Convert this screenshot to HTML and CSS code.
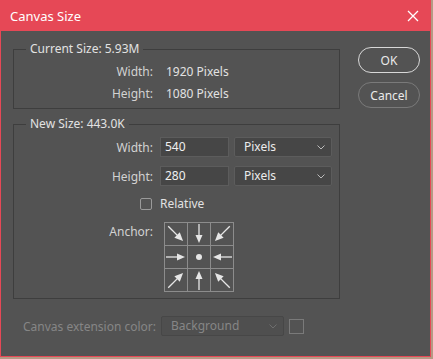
FILE: index.html
```html
<!DOCTYPE html>
<html lang="en">
<head>
    <meta charset="UTF-8">
    <title>Canvas Size</title>
    <link rel="stylesheet" href="styles.css">
</head>
<body>
    <div class="window">
        <div class="titlebar">
            <span class="title">Canvas Size</span>
            <svg class="close" width="12" height="12" viewBox="0 0 12 12">
                <path d="M1 1 L11 11 M11 1 L1 11" stroke="#fff" stroke-width="1.3" fill="none"/>
            </svg>
        </div>

        <div class="content">
            <div class="main">
                <fieldset class="group group-current">
                    <legend>Current Size: 5.93M</legend>
                    <div class="info-row"><span class="label">Width:</span><span class="value">1920 Pixels</span></div>
                    <div class="info-row"><span class="label">Height:</span><span class="value">1080 Pixels</span></div>
                </fieldset>

                <fieldset class="group group-new">
                    <legend>New Size: 443.0K</legend>
                    <div class="field">
                        <span class="label">Width:</span>
                        <div class="input">540</div>
                        <div class="select">Pixels
                            <svg class="chevron" width="8" height="5" viewBox="0 0 8 5"><path d="M0.5 0.5 L4 4 L7.5 0.5" stroke="#bbb" fill="none"/></svg>
                        </div>
                    </div>
                    <div class="field">
                        <span class="label">Height:</span>
                        <div class="input">280</div>
                        <div class="select">Pixels
                            <svg class="chevron" width="8" height="5" viewBox="0 0 8 5"><path d="M0.5 0.5 L4 4 L7.5 0.5" stroke="#bbb" fill="none"/></svg>
                        </div>
                    </div>
                    <div class="field field-check">
                        <span class="label"><span class="checkbox"></span></span>
                        <span class="check-text">Relative</span>
                    </div>
                    <div class="field field-anchor">
                        <span class="label">Anchor:</span>
                        <svg class="anchor" width="70" height="70" viewBox="0 0 70 70">
                            <g stroke="#8c8c8c" stroke-width="1" fill="none">
                                <rect x="0.5" y="0.5" width="69" height="69"/>
                                <path d="M23.5 0 V70 M46.5 0 V70 M0 23.5 H70 M0 46.5 H70"/>
                            </g>
                            <defs>
                                <g id="arrow">
                                    <path d="M-10 0 H2" stroke="#e6e6e6" stroke-width="1.3"/>
                                    <polygon points="1,-3.5 9,0 1,3.5" fill="#e6e6e6"/>
                                </g>
                                <g id="diag">
                                    <path d="M-11 0 H3" stroke="#e6e6e6" stroke-width="1.4"/>
                                    <polygon points="1.5,-3.8 10,0 1.5,3.8" fill="#e6e6e6"/>
                                </g>
                            </defs>
                            <use href="#diag" transform="translate(12 12) rotate(45)"/>
                            <use href="#arrow" transform="translate(35 12) rotate(90)"/>
                            <use href="#diag" transform="translate(58 12) rotate(135)"/>
                            <use href="#arrow" transform="translate(12 35)"/>
                            <circle cx="35" cy="35" r="3" fill="#e6e6e6"/>
                            <use href="#arrow" transform="translate(58 35) rotate(180)"/>
                            <use href="#diag" transform="translate(12 58) rotate(-45)"/>
                            <use href="#arrow" transform="translate(35 58) rotate(-90)"/>
                            <use href="#diag" transform="translate(58 58) rotate(-135)"/>
                        </svg>
                    </div>
                </fieldset>

                <div class="extension">
                    <span class="ext-label">Canvas extension color:</span>
                    <div class="select select-disabled">Background
                        <svg class="chevron" width="8" height="5" viewBox="0 0 8 5"><path d="M0.5 0.5 L4 4 L7.5 0.5" stroke="#6e6e6e" fill="none"/></svg>
                    </div>
                    <span class="swatch"></span>
                </div>
            </div>

            <div class="buttons">
                <button class="btn btn-ok">OK</button>
                <button class="btn btn-cancel">Cancel</button>
            </div>
        </div>
    </div>
</body>
</html>
```

FILE: styles.css
```css
* {
    box-sizing: border-box;
}

body {
    margin: 0;
    background: #b59a84;
    font-family: 'Noto Sans', 'Open Sans', sans-serif;
    font-size: 12px;
    color: #e2e2e2;
}

.window {
    width: 431px;
    height: 357px;
    background: #535353;
    border: 1px solid #e64856;
    border-top: none;
}

.titlebar {
    height: 31px;
    background: #e64856;
    display: flex;
    align-items: center;
    justify-content: space-between;
    padding: 0 11px 0 9px;
}

.title {
    color: #fff;
    font-size: 13px;
}

.close {
    display: block;
}

.content {
    display: flex;
    padding-top: 11px;
}

.main {
    margin-left: 12px;
    width: 327px;
}

.group {
    margin: 0;
    padding: 0;
    border: 1px solid #3e3e3e;
    min-width: 0;
}

.group legend {
    margin-left: 12px;
    padding: 0 4px;
    line-height: 14px;
    color: #e2e2e2;
}

.group-current {
    padding: 4px 0;
}

.info-row {
    display: flex;
    align-items: center;
    height: 22px;
}

.label {
    width: 139px;
    text-align: right;
    color: #d2d2d2;
    flex-shrink: 0;
}

.info-row .value {
    margin-left: 13px;
    color: #e2e2e2;
}

.group-new {
    margin-top: 8px;
    padding: 6px 0 6px;
}

.field {
    display: flex;
    align-items: center;
    height: 20px;
}

.field + .field {
    margin-top: 9px;
}

.field .label {
    margin-right: 7px;
}

.input {
    width: 69px;
    height: 20px;
    background: #464646;
    border: 1px solid #5c5c5c;
    padding-left: 4px;
    line-height: 18px;
    color: #f0f0f0;
}

.select {
    width: 98px;
    height: 20px;
    margin-left: 5px;
    background: #464646;
    border: 1px solid #5c5c5c;
    border-radius: 2px;
    padding: 0 6px 0 9px;
    line-height: 18px;
    color: #ececec;
    display: flex;
    align-items: center;
    justify-content: space-between;
}

.chevron {
    display: block;
}

.field-check {
    margin-top: 7px !important;
}

.checkbox {
    display: inline-block;
    width: 12px;
    height: 12px;
    border: 1px solid #9a9a9a;
    border-radius: 2px;
    vertical-align: middle;
    margin-right: 1px;
}

.check-text {
    color: #e2e2e2;
}

.field-anchor {
    height: 70px;
    align-items: flex-start;
}

.field-anchor .label {
    margin-top: 1px;
}

.anchor {
    display: block;
    margin-left: 4px;
}

.field + .field-anchor {
    margin-top: 9px;
}

.extension {
    display: flex;
    align-items: center;
    margin-top: 17px;
    height: 20px;
}

.ext-label {
    margin-left: 10px;
    width: 136px;
    color: #868686;
}

.select-disabled {
    width: 123px;
    margin-left: 2px;
    background: #4f4f4f;
    border-color: #474747;
    color: #868686;
}

.swatch {
    width: 15px;
    height: 15px;
    margin-left: 5px;
    border: 1px solid #7a7a7a;
}

.buttons {
    margin-left: 18px;
    padding-top: 5px;
    display: flex;
    flex-direction: column;
    gap: 9px;
}

.btn {
    width: 62px;
    height: 26px;
    border-radius: 13px;
    background: transparent;
    font-family: inherit;
    font-size: 12px;
    color: #eaeaea;
    padding: 0;
}

.btn-ok {
    border: 1.5px solid #d8d8d8;
}

.btn-cancel {
    border: 1px solid #7a7a7a;
}
```
